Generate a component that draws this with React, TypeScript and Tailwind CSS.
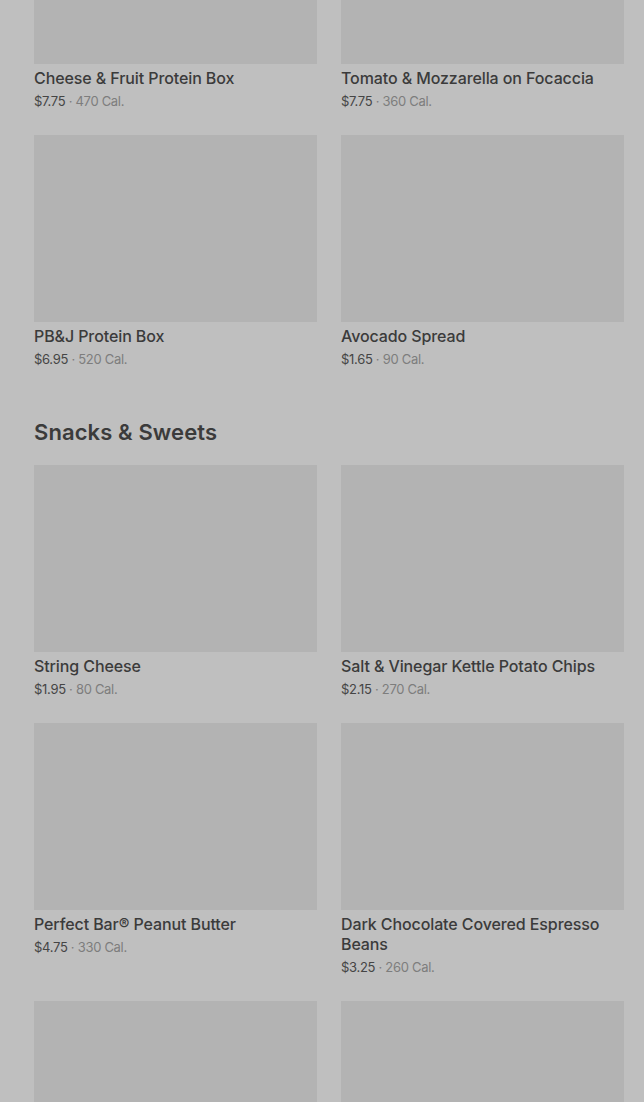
type Item = { name: string; price: string; cal: string }

const lunch: Item[] = [
  { name: 'Cheese & Fruit Protein Box', price: '$7.75', cal: '470 Cal.' },
  { name: 'Tomato & Mozzarella on Focaccia', price: '$7.75', cal: '360 Cal.' },
  { name: 'PB&J Protein Box', price: '$6.95', cal: '520 Cal.' },
  { name: 'Avocado Spread', price: '$1.65', cal: '90 Cal.' },
]

const snacks: Item[] = [
  { name: 'String Cheese', price: '$1.95', cal: '80 Cal.' },
  { name: 'Salt & Vinegar Kettle Potato Chips', price: '$2.15', cal: '270 Cal.' },
  { name: 'Perfect Bar® Peanut Butter', price: '$4.75', cal: '330 Cal.' },
  { name: 'Dark Chocolate Covered Espresso Beans', price: '$3.25', cal: '260 Cal.' },
]

function Card({ item }: { item: Item }) {
  return (
    <div>
      <div className="h-[187px] w-full bg-[#b3b3b3]" />
      <p className="mt-1 text-[16px] font-medium leading-5 tracking-[-0.1px] text-[#3b3b3b]">{item.name}</p>
      <p className="mt-[3px] text-[13px] leading-5 tracking-[-0.3px]">
        <span className="text-[#454545]">{item.price}</span>
        <span className="text-[#7d7d7d]"> · {item.cal}</span>
      </p>
    </div>
  )
}

export default function App() {
  return (
    <div
      className="h-[1102px] overflow-hidden bg-[#bfbfbf]"
      style={{ fontFamily: 'Inter, "Noto Sans", sans-serif' }}
    >
      <div className="-mt-[123px] pl-[34px] pr-[20px]">
        <div className="grid grid-cols-2 gap-x-6 gap-y-6">
          {lunch.map((it) => <Card key={it.name} item={it} />)}
        </div>

        <h2 className="mt-[47px] mb-[17px] text-[22px] font-semibold leading-8 tracking-[0.1px] text-[#3b3b3b]">
          Snacks &amp; Sweets
        </h2>
        <div className="grid grid-cols-2 gap-x-6 gap-y-6">
          {snacks.map((it) => <Card key={it.name} item={it} />)}
          <div className="h-[187px] bg-[#b3b3b3]" />
          <div className="h-[187px] bg-[#b3b3b3]" />
        </div>
      </div>
    </div>
  )
}
